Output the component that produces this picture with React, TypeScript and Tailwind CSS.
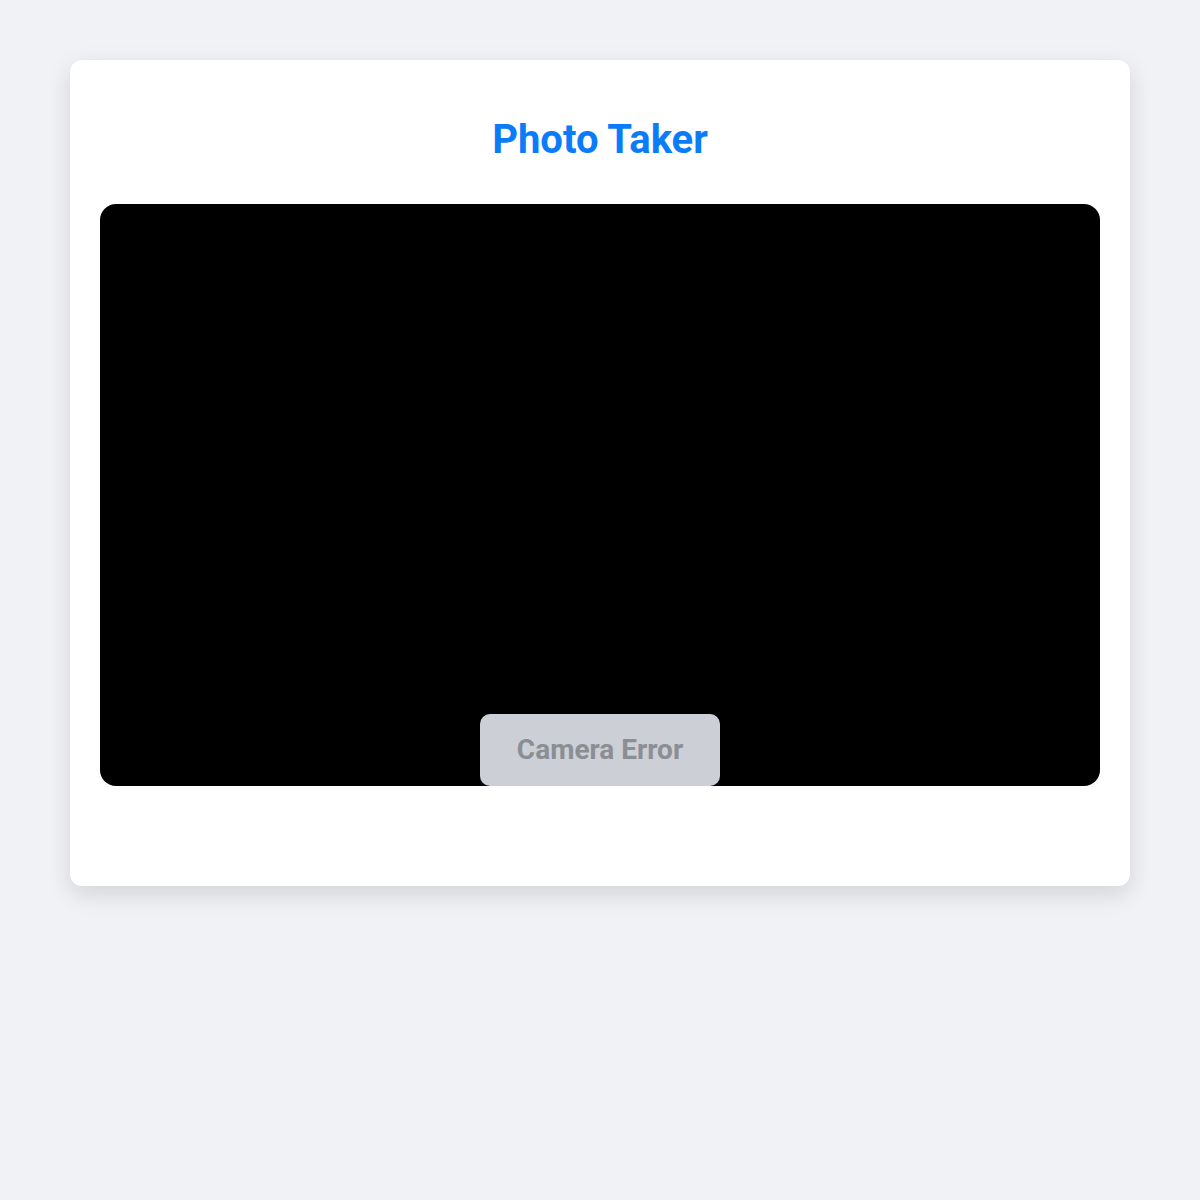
export default function App() {
  return (
    <div
      className="min-h-[1200px] bg-[#f0f2f5] pt-[60px]"
      style={{ fontFamily: 'Roboto, "Liberation Sans", sans-serif' }}
    >
      <div className="mx-auto w-[1060px] rounded-xl bg-white p-[30px] shadow-[0_8px_24px_rgba(0,0,0,0.13)]">
        {/* Title */}
        <h1 className="mt-[28px] mb-[42px] text-center text-[40px] font-bold leading-[44px] text-[#0a7cf7]">
          Photo Taker
        </h1>

        {/* Camera view */}
        <div className="relative h-[582px] w-full rounded-2xl bg-black">
          <button
            disabled
            className="absolute bottom-0 left-1/2 h-[72px] w-[240px] -translate-x-1/2 rounded-[10px] bg-[#ccd0d6] text-[28px] font-bold text-[#8b8e93]"
          >
            Camera Error
          </button>
        </div>

        <div className="h-[70px]" />
      </div>
    </div>
  );
}
